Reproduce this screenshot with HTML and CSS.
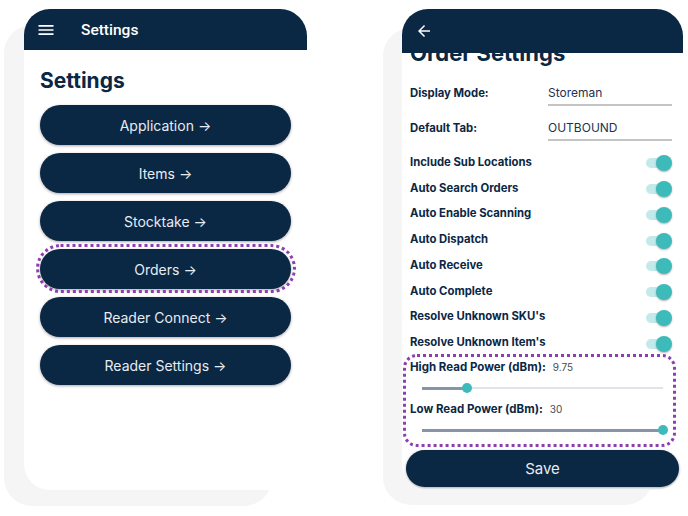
FILE: index.html
```html
<!DOCTYPE html>
<html lang="en">
<head>
<meta charset="utf-8">
<title>Settings</title>
<link rel="stylesheet" href="styles.css">
</head>
<body>
<div class="stage">
  <div class="device device-left">
    <div class="device-back"></div>
    <section class="phone">
      <header class="appbar">
        <svg class="icon-menu" viewBox="0 0 24 24" aria-hidden="true"><path d="M3 18h18v-2H3v2zm0-5h18v-2H3v2zm0-7v2h18V6H3z"/></svg>
        <span class="appbar-title">Settings</span>
      </header>
      <div class="screen screen-left">
        <h1 class="page-title">Settings</h1>
        <nav class="menu">
          <a class="menu-btn">Application <span class="arrow">→</span></a>
          <a class="menu-btn">Items <span class="arrow">→</span></a>
          <a class="menu-btn">Stocktake <span class="arrow">→</span></a>
          <a class="menu-btn is-highlighted">Orders <span class="arrow">→</span></a>
          <a class="menu-btn">Reader Connect <span class="arrow">→</span></a>
          <a class="menu-btn">Reader Settings <span class="arrow">→</span></a>
        </nav>
      </div>
    </section>
  </div>

  <div class="device device-right">
    <div class="device-back"></div>
    <section class="phone">
      <header class="appbar appbar-tall">
        <svg class="icon-back" viewBox="0 0 24 24" aria-hidden="true"><path d="M20 11H7.83l5.59-5.59L12 4l-8 8 8 8 1.41-1.41L7.83 13H20v-2z"/></svg>
      </header>
      <div class="screen screen-right">
        <div class="scroll-content">
          <h1 class="page-title">Order Settings</h1>
          <div class="field-row"><span class="field-label">Display Mode:</span><span class="field-input">Storeman</span></div>
          <div class="field-row"><span class="field-label">Default Tab:</span><span class="field-input">OUTBOUND</span></div>
          <div class="toggles">
            <div class="toggle-row"><span class="toggle-label">Include Sub Locations</span><span class="switch"><span class="switch-track"></span><span class="switch-thumb"></span></span></div>
            <div class="toggle-row"><span class="toggle-label">Auto Search Orders</span><span class="switch"><span class="switch-track"></span><span class="switch-thumb"></span></span></div>
            <div class="toggle-row"><span class="toggle-label">Auto Enable Scanning</span><span class="switch"><span class="switch-track"></span><span class="switch-thumb"></span></span></div>
            <div class="toggle-row"><span class="toggle-label">Auto Dispatch</span><span class="switch"><span class="switch-track"></span><span class="switch-thumb"></span></span></div>
            <div class="toggle-row"><span class="toggle-label">Auto Receive</span><span class="switch"><span class="switch-track"></span><span class="switch-thumb"></span></span></div>
            <div class="toggle-row"><span class="toggle-label">Auto Complete</span><span class="switch"><span class="switch-track"></span><span class="switch-thumb"></span></span></div>
            <div class="toggle-row"><span class="toggle-label">Resolve Unknown SKU's</span><span class="switch"><span class="switch-track"></span><span class="switch-thumb"></span></span></div>
            <div class="toggle-row"><span class="toggle-label">Resolve Unknown Item's</span><span class="switch"><span class="switch-track"></span><span class="switch-thumb"></span></span></div>
          </div>
          <div class="power-group">
            <div class="power-label">High Read Power (dBm):<span class="power-value">9.75</span></div>
            <div class="slider"><div class="slider-fill" style="width:18.6%"></div><div class="slider-thumb" style="left:18.6%"></div></div>
            <div class="power-label">Low Read Power (dBm):<span class="power-value">30</span></div>
            <div class="slider"><div class="slider-fill" style="width:100%"></div><div class="slider-thumb" style="left:100%"></div></div>
          </div>
          <button class="save-btn">Save</button>
        </div>
      </div>
    </section>
  </div>
</div>
</body>
</html>
```

FILE: styles.css
```css
html {
  background: #ffffff;
}
body {
  margin: 0;
  min-height: 516px;
  font-family: "Inter", "Noto Sans", "DejaVu Sans", sans-serif;
  color: #0a2744;
}
.stage {
  display: flex;
  gap: 95px;
  padding: 9px 0 12px 24px;
}
.device {
  display: grid;
  align-items: start;
  justify-items: start;
}
.device > * {
  grid-area: 1 / 1;
}
.device-back {
  background: #f5f5f5;
  border-radius: 28px;
}
.device-left .device-back {
  width: 268px;
  height: 481px;
  margin: 16px 0 0 -20px;
}
.device-right .device-back {
  width: 270px;
  height: 477px;
  margin: 19px 0 0 -19px;
}
.phone {
  height: 481px;
  display: flex;
  flex-direction: column;
  background: #ffffff;
  border-radius: 26px 27px 26px 26px;
}
.device-left .phone {
  width: 283px;
}
.device-right .phone {
  width: 281px;
}
.appbar {
  flex: none;
  height: 41px;
  display: flex;
  align-items: center;
  padding-left: 12px;
  background: #0a2744;
  color: #ffffff;
  border-radius: 26px 27px 0 0;
  position: relative;
  z-index: 1;
}
.appbar-tall {
  height: 44px;
  padding-left: 13px;
}
.icon-menu {
  width: 20px;
  height: 20px;
  fill: #ffffff;
}
.icon-back {
  width: 18px;
  height: 18px;
  fill: #ffffff;
}
.appbar-title {
  margin-left: 25px;
  font-family: "Roboto", "Liberation Sans", sans-serif;
  font-size: 15.5px;
  font-weight: 500;
}
.screen {
  flex: 1;
  overflow: hidden;
  border-radius: 0 0 26px 26px;
}
.screen-left {
  padding: 16px 16px 0;
}
.page-title {
  margin: 0 0 9px;
  font-size: 21px;
  line-height: 30px;
  font-weight: 700;
  color: #0a2744;
}
.menu {
  display: flex;
  flex-direction: column;
  gap: 8px;
}
.menu-btn {
  position: relative;
  height: 40px;
  display: flex;
  align-items: center;
  justify-content: center;
  gap: 4px;
  border-radius: 20px;
  background: #0a2744;
  color: #e8ecf1;
  font-size: 14px;
  box-shadow: 0 1px 3px rgba(0, 0, 0, 0.35);
}
.arrow {
  font-size: 14px;
}
.is-highlighted::after {
  content: "";
  position: absolute;
  top: -5px;
  bottom: -4px;
  left: -4px;
  right: -5px;
  border: 3px dotted #8e3fae;
  border-radius: 26px;
}
.screen-right {
  padding: 0 11px 0 8px;
}
.scroll-content {
  margin-top: -15px;
}
.screen-right .page-title {
  font-size: 22px;
  margin-bottom: 13px;
}
.field-row {
  display: flex;
  align-items: flex-start;
  margin-bottom: 10px;
}
.field-label {
  width: 138px;
  flex: none;
  font-size: 11.3px;
  font-weight: 700;
  line-height: 24px;
}
.field-input {
  flex: 1;
  height: 23px;
  line-height: 24px;
  font-size: 12px;
  color: #1d3350;
  border-bottom: 2px solid #c4c4c4;
}
.toggles {
  margin-top: -2px;
}
.toggle-row {
  height: 25.75px;
  display: flex;
  align-items: center;
  justify-content: space-between;
}
.toggle-label {
  font-size: 11.3px;
  font-weight: 700;
}
.switch {
  position: relative;
  width: 26px;
  height: 16px;
  margin-top: 3px;
}
.switch-track {
  position: absolute;
  left: 0;
  right: 3px;
  top: 3px;
  height: 10px;
  border-radius: 5px;
  background: #c3eaea;
}
.switch-thumb {
  position: absolute;
  right: 0;
  top: 0;
  width: 16px;
  height: 16px;
  border-radius: 50%;
  background: #3dbaba;
  box-shadow: 0 1px 2px rgba(0, 0, 0, 0.3);
}
.power-group {
  position: relative;
  padding: 2px 0 6px;
}
.power-group::after {
  content: "";
  position: absolute;
  top: -1px;
  bottom: 0;
  left: -7px;
  right: -4px;
  border: 3px dotted #8e3fae;
  border-radius: 14px;
}
.power-label {
  height: 20px;
  line-height: 20px;
  font-size: 11.5px;
  font-weight: 700;
}
.power-value {
  margin-left: 7px;
  font-size: 10px;
  font-weight: 400;
  color: #444c55;
}
.slider {
  position: relative;
  height: 20px;
  margin: 1px 9px 1px 12px;
}
.slider::before {
  content: "";
  position: absolute;
  left: 0;
  right: 0;
  top: 9px;
  height: 2px;
  background: #e0e4e9;
}
.slider-fill {
  position: absolute;
  left: 0;
  top: 8.5px;
  height: 3px;
  background: #8794a8;
}
.slider-thumb {
  position: absolute;
  top: 5px;
  width: 10px;
  height: 10px;
  margin-left: -5px;
  border-radius: 50%;
  background: #3dbaba;
}
.save-btn {
  display: block;
  width: calc(100% + 11px);
  height: 37px;
  margin: 3px -7px 0 -4px;
  border: 0;
  border-radius: 19px;
  background: #0a2744;
  color: #e8ecf1;
  font-family: inherit;
  font-size: 15px;
  box-shadow: 0 1px 3px rgba(0, 0, 0, 0.35);
}
```
